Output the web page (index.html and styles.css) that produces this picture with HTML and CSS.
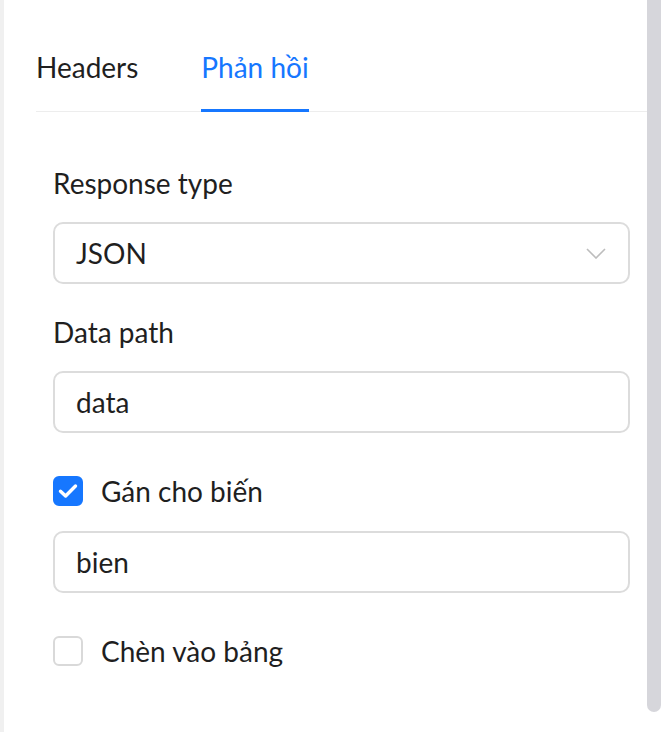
FILE: index.html
```html
<!DOCTYPE html>
<html lang="vi">
<head>
<meta charset="utf-8">
<title>Phản hồi</title>
<link rel="stylesheet" href="styles.css">
</head>
<body>
<div class="page">
  <div class="panel">
    <div class="tabs">
      <div class="tab">Headers</div>
      <div class="tab active">Phản hồi</div>
    </div>
    <div class="form">
      <div class="item">
        <div class="label">Response type</div>
        <div class="control select">
          <span>JSON</span>
          <svg class="chev" width="20" height="11" viewBox="0 0 20 11"><path d="M1 1 L10 10 L19 1" fill="none" stroke="#bdbdbd" stroke-width="1.6"/></svg>
        </div>
      </div>
      <div class="item">
        <div class="label">Data path</div>
        <div class="control">data</div>
      </div>
      <div class="check-row">
        <span class="box checked">
          <svg width="20" height="16" viewBox="0 0 20 16"><path d="M2.5 8.2 L7.6 13 L17.5 3" fill="none" stroke="#fff" stroke-width="3.4" stroke-linecap="round" stroke-linejoin="round"/></svg>
        </span>
        <span class="check-label">Gán cho biến</span>
      </div>
      <div class="control var">bien</div>
      <div class="check-row second">
        <span class="box"></span>
        <span class="check-label">Chèn vào bảng</span>
      </div>
    </div>
  </div>
  <div class="scrollbar"><div class="thumb"></div></div>
</div>
</body>
</html>
```

FILE: styles.css
```css
html, body {
  margin: 0;
  padding: 0;
  background: #ffffff;
}
body {
  font-family: Lato, "Open Sans", "Noto Sans", sans-serif;
  color: #1f1f1f;
  font-size: 28px;
}
.page {
  display: flex;
  height: 732px;
  width: 662px;
  overflow: hidden;
}
.panel {
  flex: 1;
  border-left: 4px solid #f0f0f0;
  padding-left: 32px;
  min-width: 0;
}
.tabs {
  display: flex;
  border-bottom: 1px solid #ededed;
  height: 111px;
}
.tab {
  position: relative;
  padding-top: 48px;
  line-height: 38px;
  height: 63px;
}
.tab + .tab {
  margin-left: 63px;
}
.tab.active {
  color: #1677ff;
}
.tab.active::after {
  content: "";
  position: absolute;
  left: 0;
  right: 0;
  bottom: -1px;
  height: 3.5px;
  background: #1677ff;
}
.form {
  padding: 52px 17px 0 17px;
}
.item + .item {
  margin-top: 29px;
}
.label {
  line-height: 38px;
  margin-bottom: 20px;
}
.control {
  box-sizing: border-box;
  height: 62px;
  border: 2px solid #dcdcdc;
  border-radius: 10px;
  padding: 0 22px 0 21px;
  display: flex;
  align-items: center;
  line-height: 38px;
}
.select {
  justify-content: space-between;
}
.chev {
  margin-right: 0;
}
.check-row {
  display: flex;
  align-items: center;
  height: 38px;
  margin-top: 39px;
  gap: 18px;
}
.check-row.second {
  margin-top: 39px;
}
.control.var {
  margin-top: 21px;
}
.box {
  box-sizing: border-box;
  width: 30px;
  height: 30px;
  border-radius: 6px;
  border: 2px solid #d9d9d9;
  background: #fff;
  display: flex;
  align-items: center;
  justify-content: center;
}
.box.checked {
  background: #1677ff;
  border-color: #1677ff;
}
.scrollbar {
  width: 15px;
  background: #ffffff;
}
.thumb {
  width: 14px;
  height: 712px;
  background: #d6d6db;
  border-radius: 0 0 7px 7px;
}
```
